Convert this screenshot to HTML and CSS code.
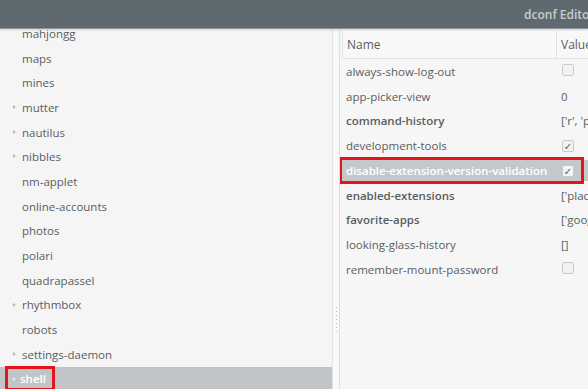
FILE: index.html
```html
<!DOCTYPE html>
<html lang="en">
<head>
    <meta charset="UTF-8">
    <title>dconf Editor</title>
    <link rel="stylesheet" href="styles.css">
</head>
<body>
    <div class="titlebar">
        <span class="title">dconf Editor</span>
    </div>
    <div class="main">
        <div class="tree">
            <ul class="tree-list">
                <li><span class="label">mahjongg</span></li>
                <li><span class="label">maps</span></li>
                <li><span class="label">mines</span></li>
                <li class="has-kids"><span class="label">mutter</span></li>
                <li class="has-kids"><span class="label">nautilus</span></li>
                <li class="has-kids"><span class="label">nibbles</span></li>
                <li><span class="label">nm-applet</span></li>
                <li><span class="label">online-accounts</span></li>
                <li><span class="label">photos</span></li>
                <li><span class="label">polari</span></li>
                <li><span class="label">quadrapassel</span></li>
                <li class="has-kids"><span class="label">rhythmbox</span></li>
                <li><span class="label">robots</span></li>
                <li class="has-kids"><span class="label">settings-daemon</span></li>
                <li class="has-kids selected"><span class="mark"><span class="label">shell</span></span></li>
            </ul>
        </div>
        <div class="pane-handle"><span class="grip"></span></div>
        <div class="keys">
            <div class="keys-head">
                <span class="col-name">Name</span>
                <span class="col-value">Value</span>
            </div>
            <div class="key-row">
                <span class="col-name">always-show-log-out</span>
                <span class="col-value"><span class="check"></span></span>
            </div>
            <div class="key-row">
                <span class="col-name">app-picker-view</span>
                <span class="col-value">0</span>
            </div>
            <div class="key-row changed">
                <span class="col-name">command-history</span>
                <span class="col-value">['r', 'p</span>
            </div>
            <div class="key-row">
                <span class="col-name">development-tools</span>
                <span class="col-value"><span class="check on">&#10003;</span></span>
            </div>
            <div class="key-row changed selected">
                <div class="mark">
                    <span class="col-name">disable-extension-version-validation</span>
                    <span class="col-value"><span class="check on">&#10003;</span></span>
                </div>
            </div>
            <div class="key-row changed">
                <span class="col-name">enabled-extensions</span>
                <span class="col-value">['place</span>
            </div>
            <div class="key-row changed">
                <span class="col-name">favorite-apps</span>
                <span class="col-value">['goog</span>
            </div>
            <div class="key-row">
                <span class="col-name">looking-glass-history</span>
                <span class="col-value">[]</span>
            </div>
            <div class="key-row">
                <span class="col-name">remember-mount-password</span>
                <span class="col-value"><span class="check"></span></span>
            </div>
        </div>
    </div>
</body>
</html>
```

FILE: styles.css
```css
html, body {
    margin: 0;
    height: 100%;
    overflow: hidden;
}
body {
    font-family: 'Open Sans', 'DejaVu Sans', sans-serif;
    font-size: 11.5px;
    color: #595d5f;
    background: #f5f5f5;
    display: flex;
    flex-direction: column;
}
.titlebar {
    height: 28px;
    flex: none;
    background: #5e6a70;
    border-bottom: 1px solid #8d9599;
    box-shadow: 0 1px 2px rgba(0, 0, 0, 0.15);
    display: flex;
    align-items: center;
    padding-left: 524px;
    white-space: nowrap;
    overflow: hidden;
    position: relative;
    z-index: 2;
}
.title {
    color: #c9cdd0;
    font-weight: 600;
    font-size: 12px;
}
.main {
    flex: 1;
    display: flex;
    min-height: 0;
}
.tree {
    width: 332px;
    flex: none;
    overflow: hidden;
    background: #f5f5f5;
}
.tree-list {
    list-style: none;
    margin: -8px 0 0;
    padding: 0;
}
.tree-list li {
    height: 24.7px;
    display: flex;
    align-items: center;
    padding-left: 22px;
    position: relative;
}
.tree-list li.has-kids::before {
    content: "";
    position: absolute;
    left: 13px;
    top: 10px;
    border-left: 3px solid #b4b8ba;
    border-top: 2.5px solid transparent;
    border-bottom: 2.5px solid transparent;
}
.tree-list li.selected {
    background: #c1c5c8;
    color: #ffffff;
    font-weight: 600;
}
.tree-list li.selected::before {
    border-left-color: #e8eaeb;
    z-index: 1;
}
.tree-list .mark {
    margin-left: -17px;
    padding: 0 6px 0 12px;
    height: 19px;
    display: flex;
    align-items: center;
    border: 3px solid #e3141b;
}
.pane-handle {
    width: 8px;
    flex: none;
    background: #f9f9f9;
    border-left: 1px solid #e2e2e2;
    border-right: 1px solid #dedede;
    display: flex;
    align-items: flex-end;
    justify-content: center;
    padding-bottom: 56px;
    box-sizing: border-box;
}
.grip {
    width: 1px;
    height: 26px;
    background: repeating-linear-gradient(to bottom, #b8bcbe 0 1px, transparent 1px 4px);
}
.keys {
    flex: 1;
    background: #f6f6f6;
    overflow: hidden;
    padding-top: 2px;
}
.keys-head {
    height: 27px;
    display: flex;
    align-items: center;
    border-bottom: 1px solid #e4e4e4;
    border-left: 1px solid #e4e4e4;
    margin-left: 2px;
    background: #f8f8f8;
    font-size: 12px;
}
.keys-head .col-name {
    width: 209px;
    padding-left: 4px;
}
.keys-head .col-value {
    border-left: 1px solid #e0e0e0;
    padding-left: 4px;
    align-self: stretch;
    display: flex;
    align-items: center;
}
.col-name {
    width: 214px;
    flex: none;
    white-space: nowrap;
}
.col-value {
    padding-left: 5px;
    white-space: nowrap;
    font-weight: 400;
}
.key-row {
    height: 24.75px;
    display: flex;
    align-items: center;
    padding-left: 6px;
}
.key-row .col-name {
    width: 210px;
}
.key-row.changed .col-name {
    font-weight: 600;
}
.key-row.selected {
    background: linear-gradient(to bottom, transparent 2px, #c4c8cb 2px, #c4c8cb 23px, transparent 23px);
    color: #ffffff;
}
.key-row .mark {
    display: flex;
    align-items: center;
    margin-left: -7px;
    padding-left: 4px;
    width: 235px;
    height: 21px;
    border: 3px solid #e3141b;
}
.check {
    display: inline-flex;
    width: 10px;
    height: 10px;
    border: 1px solid #c9c9c9;
    border-radius: 2px;
    background: #f2f2f2;
    margin-left: 1px;
    align-items: center;
    justify-content: center;
    font-size: 10px;
    font-weight: 400;
    line-height: 1;
    color: #5a5e60;
}
.selected .check {
    background: #f4f4f4;
}
```
